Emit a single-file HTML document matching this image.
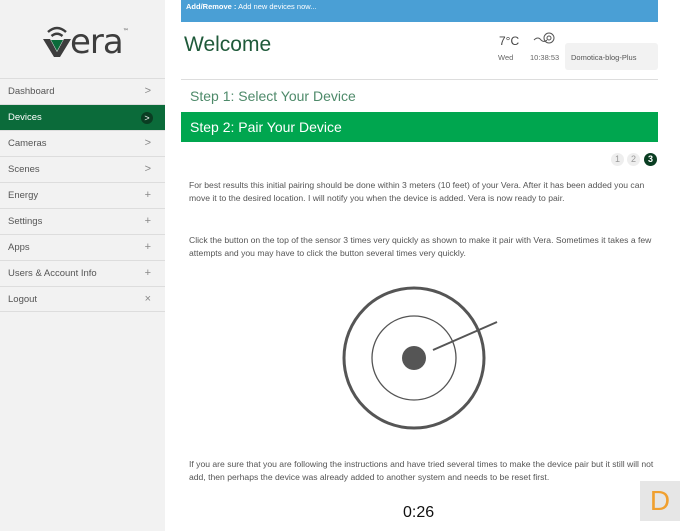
<!DOCTYPE html>
<html><head><style>
*{margin:0;padding:0;box-sizing:border-box}
body{width:690px;height:531px;overflow:hidden;background:#fff;font-family:"Liberation Sans",sans-serif;position:relative}
#side{position:absolute;left:0;top:0;width:165px;height:531px;background:#f2f2f2}
.nav{position:absolute;left:0;width:165px;height:26px;border-top:1px solid #ddd;font-size:9.5px;color:#555;line-height:25px;padding-left:8px}
.nav span{position:absolute;right:14px;top:0;color:#888;font-size:11px}
.act{background:#0b6b3a;color:#fff}
.abs{position:absolute}
p.t{position:absolute;left:189px;width:466px;font-size:8.6px;line-height:12.5px;color:#555}
</style></head><body>
<div id="side">
 <svg class="abs" style="left:42px;top:24px" width="30" height="34" viewBox="0 0 30 34"><path d="M6 8 Q15 0 24 8" stroke="#3d3d3d" stroke-width="2.5" fill="none"/><path d="M9.5 12 Q15 7.5 20.5 12" stroke="#3d3d3d" stroke-width="2.5" fill="none"/><path d="M1 15 L8 15 L15 28 L22 15 L29 15 L18 33 L12 33 Z" fill="#3d3d3d"/><path d="M9 16 L21 16 L15 27 Z" fill="#0b6b3a"/></svg>
 <div class="abs" style="left:70px;top:22px;font-size:34px;color:#3d3d3d;letter-spacing:-1px;font-family:'DejaVu Sans',sans-serif;line-height:40px">era<span style="font-size:6px;vertical-align:top;line-height:20px">™</span></div>
 <div class="nav" style="top:78px">Dashboard<span>&gt;</span></div>
 <div class="nav act" style="top:104px">Devices<span style="right:12px;top:7px;width:12px;height:12px;border-radius:6px;background:#0a3d22;color:#fff;font-size:9px;line-height:12px;text-align:center">&gt;</span></div>
 <div class="nav" style="top:130px">Cameras<span>&gt;</span></div>
 <div class="nav" style="top:156px">Scenes<span>&gt;</span></div>
 <div class="nav" style="top:182px">Energy<span>+</span></div>
 <div class="nav" style="top:208px">Settings<span>+</span></div>
 <div class="nav" style="top:234px">Apps<span>+</span></div>
 <div class="nav" style="top:260px">Users &amp; Account Info<span>+</span></div>
 <div class="nav" style="top:286px;border-bottom:1px solid #ddd">Logout<span>×</span></div>
</div>
<div class="abs" style="left:181px;top:0;width:477px;height:22px;background:#4a9fd5;color:#fff;font-size:7.5px;padding:2px 5px"><b>Add/Remove :</b> Add new devices now...</div>
<div class="abs" style="left:184px;top:33px;font-size:21px;color:#1f5a3a">Welcome</div>
<div class="abs" style="left:499px;top:34px;font-size:12px;color:#444">7°C</div>
<div class="abs" style="left:498px;top:53px;font-size:7.5px;color:#666">Wed</div>
<div class="abs" style="left:530px;top:53px;font-size:7.5px;color:#666">10:38:53</div>
<svg class="abs" style="left:532px;top:30px" width="28" height="16"><path d="M2 10 Q6 6 9 10 Q12 13 15 10" stroke="#555" fill="none"/><circle cx="17" cy="8" r="5" stroke="#555" fill="none"/><circle cx="17" cy="8" r="2" stroke="#555" fill="none"/></svg>
<div class="abs" style="left:565px;top:43px;width:93px;height:27px;background:#f2f2f2;border-radius:3px;font-size:7.5px;color:#555;padding:10px 6px">Domotica-blog-Plus</div>
<div class="abs" style="left:181px;top:79px;width:477px;height:1px;background:#ddd"></div>
<div class="abs" style="left:190px;top:88px;font-size:14px;color:#4e8a6a">Step 1: Select Your Device</div>
<div class="abs" style="left:181px;top:112px;width:477px;height:30px;background:#00a64f;color:#fff;font-size:14px;padding:7px 9px">Step 2: Pair Your Device</div>
<div class="abs" style="left:611px;top:153px;width:13px;height:13px;border-radius:7px;background:#eee;color:#999;font-size:9px;text-align:center;line-height:13px">1</div>
<div class="abs" style="left:627px;top:153px;width:13px;height:13px;border-radius:7px;background:#eee;color:#999;font-size:9px;text-align:center;line-height:13px">2</div>
<div class="abs" style="left:644px;top:153px;width:13px;height:13px;border-radius:7px;background:#0a3d22;color:#fff;font-size:9px;text-align:center;line-height:13px;font-weight:bold">3</div>
<p class="t" style="top:179px">For best results this initial pairing should be done within 3 meters (10 feet) of your Vera. After it has been added you can move it to the desired location. I will notify you when the device is added. Vera is now ready to pair.</p>
<p class="t" style="top:234px">Click the button on the top of the sensor 3 times very quickly as shown to make it pair with Vera. Sometimes it takes a few attempts and you may have to click the button several times very quickly.</p>
<svg class="abs" style="left:0;top:0" width="690" height="531"><circle cx="414" cy="358" r="70" stroke="#555" stroke-width="3" fill="none"/><circle cx="414" cy="358" r="42" stroke="#555" stroke-width="1.3" fill="none"/><circle cx="414" cy="358" r="12" fill="#555"/><line x1="433" y1="350" x2="497" y2="322" stroke="#555" stroke-width="2"/></svg>
<p class="t" style="top:458px">If you are sure that you are following the instructions and have tried several times to make the device pair but it still will not add, then perhaps the device was already added to another system and needs to be reset first.</p>
<div class="abs" style="left:403px;top:504px;font-size:16px;color:#111">0:26</div>
<div class="abs" style="left:640px;top:481px;width:40px;height:40px;background:#e6e6e6;color:#f0a030;font-size:28px;text-align:center;line-height:40px">D</div>
</body></html>
